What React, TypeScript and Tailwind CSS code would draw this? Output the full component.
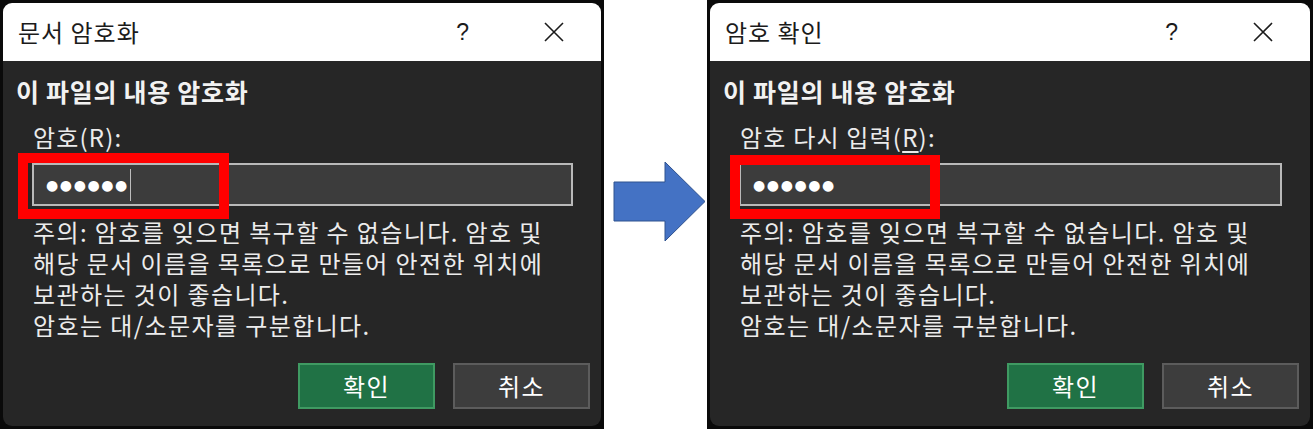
import React from 'react';

const kr = "font-['Noto_Sans_CJK_KR','Noto_Sans',sans-serif]";

interface DialogProps {
  title: string;
  label: React.ReactNode;
  showCursor?: boolean;
  mark: string;
  frame: string;
}

const Dialog = ({ title, label, showCursor, mark, frame }: DialogProps) => {
  return (
    <div className={`h-[429px] bg-[#0a0a0a] p-[3px] ${frame}`}>
      <div className={`flex h-full flex-col overflow-hidden rounded-[9px] bg-[#262626] ${kr}`}>
        {/* title bar */}
        <div className="flex h-[58px] shrink-0 items-center justify-between bg-white pl-[15px] pr-[37px]">
          <span className="text-[24px] leading-none tracking-[1px] text-[#1b1b1b]">{title}</span>
          <div className="flex items-center gap-[75px]">
            <span className="text-[23px] leading-none text-[#1b1b1b] font-['Liberation_Sans',sans-serif]">?</span>
            <svg width="20" height="20" viewBox="0 0 20 20" className="text-[#1b1b1b]">
              <path d="M1 1 L19 19 M19 1 L1 19" stroke="currentColor" strokeWidth="1.6" fill="none" />
            </svg>
          </div>
        </div>

        {/* body */}
        <div className="flex flex-1 flex-col pt-[15px]">
          <div className="pl-[13px] text-[25px] font-bold leading-[30px] tracking-[0.7px] text-[#f2f2f2]">이 파일의 내용 암호화</div>
          <div className="mt-[16px] pl-[30px] text-[24px] leading-[30px] tracking-[1.2px] text-[#ececec]">{label}</div>

          <div className="relative mt-[11px] ml-[29px] mr-[28px]">
            <div className="flex h-[43px] items-center border-2 border-[#b9b9b9] bg-[#3c3c3c] pl-[12px]">
              <span className="text-[14px] leading-none tracking-[1.6px] text-white font-['DejaVu_Sans',sans-serif]">●●●●●●</span>
              {showCursor && <span className="ml-[1px] h-[32px] w-[1.5px] bg-[#bdbdbd]" />}
            </div>
            <div className={`pointer-events-none absolute border-[10px] border-[#ff0000] ${mark}`} />
          </div>

          <div className="mt-[10px] pl-[30px] text-[24px] leading-[31px] tracking-[1.4px] text-[#ececec]">
            <p>주의: 암호를 잊으면 복구할 수 없습니다. 암호 및</p>
            <p>해당 문서 이름을 목록으로 만들어 안전한 위치에</p>
            <p>보관하는 것이 좋습니다.</p>
            <p>암호는 대/소문자를 구분합니다.</p>
          </div>

          <div className="mt-[23px] flex justify-end gap-[18px] pr-[11px]">
            <button className="flex h-[46px] w-[137px] items-center justify-center border-2 border-[#3f9a62] bg-[#207245] text-[24px] tracking-[1.4px] text-white">
              확인
            </button>
            <button className="flex h-[46px] w-[137px] items-center justify-center border-2 border-[#5c5c5c] bg-[#3d3d3d] text-[24px] tracking-[1.4px] text-white">
              취소
            </button>
          </div>
        </div>
      </div>
    </div>
  );
};

const Arrow = () => (
  <svg width="103" height="429" viewBox="0 0 103 429" className="shrink-0">
    <polygon
      points="10,182 61,182 61,162 101,201.5 61,241 61,221 10,221"
      fill="#4472C4"
      stroke="#2F528F"
      strokeWidth="1"
    />
  </svg>
);

export default function App() {
  return (
    <div className="flex h-[429px] w-[1313px] bg-white">
      <Dialog
        frame="w-[604px]"
        title="문서 암호화"
        label="암호(R):"
        showCursor
        mark="-left-[14px] -top-[10px] w-[211px] h-[66px]"
      />
      <Arrow />
      <Dialog
        frame="w-[606px]"
        title="암호 확인"
        label={
          <>
            암호 다시 입력(<span className="underline underline-offset-4">R</span>):
          </>
        }
        mark="-left-[9px] -top-[8px] w-[210px] h-[64px]"
      />
    </div>
  );
}
